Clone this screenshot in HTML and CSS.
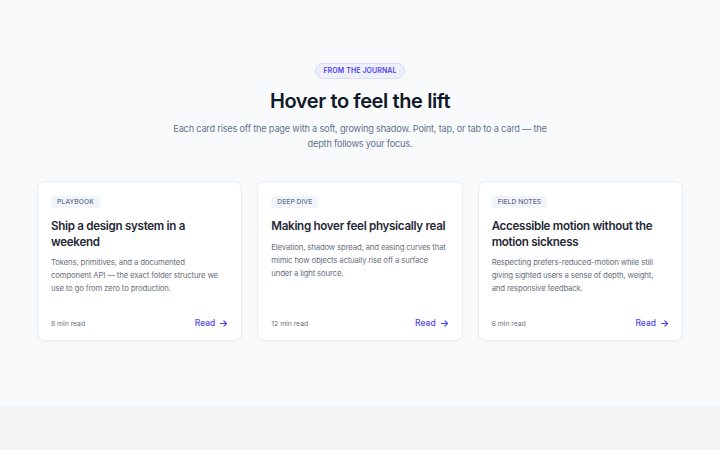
FILE: index.html
```html
<!DOCTYPE html>
<html lang="en">

<head>
    <meta charset="UTF-8">
    <meta name="viewport" content="width=device-width, initial-scale=1.0">
    <title>From the Journal</title>
    <link rel="stylesheet" href="styles.css">
</head>

<body>
    <section class="journal">
        <header class="journal-header">
            <span class="eyebrow">From the journal</span>
            <h1>Hover to feel the lift</h1>
            <p class="lead">Each card rises off the page with a soft, growing shadow. Point, tap, or tab to a card — the depth follows your focus.</p>
        </header>

        <div class="card-grid">
            <a class="card" href="#">
                <span class="tag">Playbook</span>
                <h2>Ship a design system in a weekend</h2>
                <p>Tokens, primitives, and a documented component API — the exact folder structure we use to go from zero to production.</p>
                <div class="card-footer">
                    <span class="read-time">8 min read</span>
                    <span class="read-link">Read
                        <svg viewBox="0 0 12 12" width="9" height="9"><path d="M2 6h8M6.5 2.5 10 6l-3.5 3.5" fill="none" stroke="currentColor" stroke-width="1.6" stroke-linecap="round" stroke-linejoin="round"/></svg>
                    </span>
                </div>
            </a>

            <a class="card" href="#">
                <span class="tag">Deep dive</span>
                <h2>Making hover feel physically real</h2>
                <p>Elevation, shadow spread, and easing curves that mimic how objects actually rise off a surface under a light source.</p>
                <div class="card-footer">
                    <span class="read-time">12 min read</span>
                    <span class="read-link">Read
                        <svg viewBox="0 0 12 12" width="9" height="9"><path d="M2 6h8M6.5 2.5 10 6l-3.5 3.5" fill="none" stroke="currentColor" stroke-width="1.6" stroke-linecap="round" stroke-linejoin="round"/></svg>
                    </span>
                </div>
            </a>

            <a class="card" href="#">
                <span class="tag">Field notes</span>
                <h2>Accessible motion without the motion sickness</h2>
                <p>Respecting prefers-reduced-motion while still giving sighted users a sense of depth, weight, and responsive feedback.</p>
                <div class="card-footer">
                    <span class="read-time">6 min read</span>
                    <span class="read-link">Read
                        <svg viewBox="0 0 12 12" width="9" height="9"><path d="M2 6h8M6.5 2.5 10 6l-3.5 3.5" fill="none" stroke="currentColor" stroke-width="1.6" stroke-linecap="round" stroke-linejoin="round"/></svg>
                    </span>
                </div>
            </a>
        </div>
    </section>
</body>

</html>
```

FILE: styles.css
```css
:root {
    --accent: #4f46e5;
    --heading: #111827;
    --title: #1f2937;
    --muted: #64748b;
    --border: #e5e7eb;
    --surface: #f8fafc;
}

body {
    margin: 0;
    font-family: 'Inter', 'Noto Sans', sans-serif;
    background-color: #f4f4f5;
    color: var(--title);
}

.journal {
    background-color: var(--surface);
    height: 406px;
    box-sizing: border-box;
    padding-top: 63px;
}

.journal-header {
    display: flex;
    flex-direction: column;
    align-items: center;
    text-align: center;
}

.eyebrow {
    display: inline-block;
    padding: 2px 7px;
    font-size: 7px;
    line-height: 10px;
    font-weight: 600;
    letter-spacing: 0.1px;
    text-transform: uppercase;
    color: var(--accent);
    background-color: #eef0fe;
    border: 1px solid #d9dcfb;
    border-radius: 999px;
}

h1 {
    margin: 9px 0 0;
    font-size: 20px;
    line-height: 26px;
    font-weight: 600;
    letter-spacing: -0.4px;
    color: var(--heading);
}

.lead {
    margin: 7px 0 0;
    max-width: 380px;
    font-size: 9.2px;
    line-height: 15px;
    letter-spacing: -0.2px;
    color: var(--muted);
}

.card-grid {
    display: grid;
    grid-template-columns: repeat(3, 1fr);
    gap: 15px;
    max-width: 646px;
    margin: 30px auto 0;
}

.card {
    display: flex;
    flex-direction: column;
    align-items: flex-start;
    height: 160px;
    box-sizing: border-box;
    padding: 14px 13px 12px;
    background-color: white;
    border: 1px solid #e9ecf1;
    border-radius: 8px;
    box-shadow: 0 1px 2px rgba(15, 23, 42, 0.03);
    text-decoration: none;
    color: inherit;
    transition: transform 0.25s ease, box-shadow 0.25s ease;
}

.card:hover,
.card:focus-visible {
    transform: translateY(-4px);
    box-shadow: 0 14px 28px rgba(15, 23, 42, 0.1);
}

.tag {
    padding: 2px 6px;
    font-size: 6.8px;
    line-height: 8px;
    font-weight: 500;
    text-transform: uppercase;
    color: #64748b;
    background-color: #f1f5f9;
    border-radius: 3px;
}

.card h2 {
    margin: 11px 0 0;
    font-size: 11.6px;
    line-height: 15.5px;
    font-weight: 600;
    letter-spacing: -0.3px;
    color: var(--title);
}

.card p {
    margin: 6px 0 0;
    max-width: 175.5px;
    font-size: 7.8px;
    line-height: 13px;
    letter-spacing: -0.17px;
    color: #6b7280;
}

.card-footer {
    margin-top: auto;
    width: 100%;
    display: flex;
    justify-content: space-between;
    align-items: center;
}

.read-time {
    font-size: 6.8px;
    color: #6b7280;
}

.read-link {
    display: flex;
    align-items: center;
    gap: 4px;
    font-size: 8.5px;
    font-weight: 500;
    color: var(--accent);
}
```
